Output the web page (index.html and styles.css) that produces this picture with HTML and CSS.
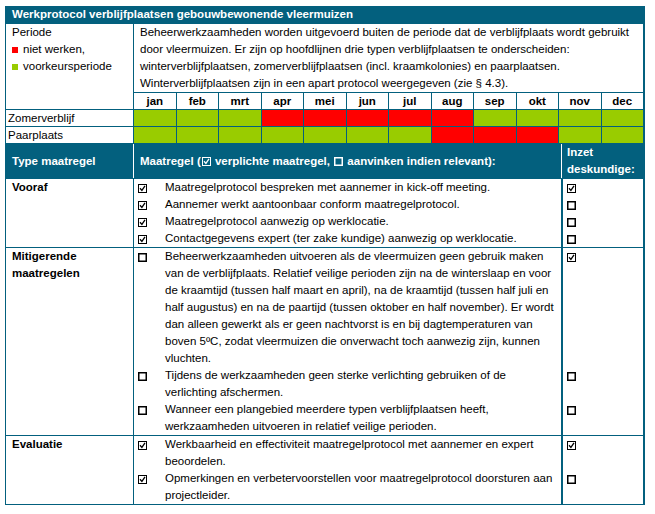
FILE: index.html
```html
<!DOCTYPE html>
<html lang="nl">
<head>
<meta charset="utf-8">
<title>Werkprotocol verblijfplaatsen gebouwbewonende vleermuizen</title>
<link rel="stylesheet" href="styles.css">
</head>
<body>
<div class="sheet">
  <div class="title">Werkprotocol verblijfplaatsen gebouwbewonende vleermuizen</div>

  <div class="top">
    <div class="legend">
      <div>Periode</div>
      <div class="key"><span class="sw red"></span>niet werken,</div>
      <div class="key"><span class="sw green"></span>voorkeursperiode</div>
    </div>
    <div class="intro">Beheerwerkzaamheden worden uitgevoerd buiten de periode dat de verblijfplaats wordt gebruikt<br>door vleermuizen. Er zijn op hoofdlijnen drie typen verblijfplaatsen te onderscheiden:<br>winterverblijfplaatsen, zomerverblijfplaatsen (incl. kraamkolonies) en paarplaatsen.<br>Winterverblijfplaatsen zijn in een apart protocol weergegeven (zie § 4.3).</div>
    <div class="mon">jan</div><div class="mon">feb</div><div class="mon">mrt</div><div class="mon">apr</div>
    <div class="mon">mei</div><div class="mon">jun</div><div class="mon">jul</div><div class="mon">aug</div>
    <div class="mon">sep</div><div class="mon">okt</div><div class="mon">nov</div><div class="mon">dec</div>

    <div class="rowlabel">Zomerverblijf</div>
    <div class="c g"></div><div class="c g"></div><div class="c g"></div><div class="c r"></div>
    <div class="c r"></div><div class="c r"></div><div class="c r"></div><div class="c r"></div>
    <div class="c g"></div><div class="c g"></div><div class="c g"></div><div class="c g"></div>

    <div class="rowlabel">Paarplaats</div>
    <div class="c g"></div><div class="c g"></div><div class="c g"></div><div class="c g"></div>
    <div class="c g"></div><div class="c g"></div><div class="c g"></div><div class="c r"></div>
    <div class="c r"></div><div class="c r"></div><div class="c g"></div><div class="c g"></div>
  </div>

  <div class="head">
    <div class="hcell type">Type maatregel</div>
    <div class="hcell mid">Maatregel (<svg class="cb" width="9" height="9" viewBox="0 0 9 9"><rect x="0.5" y="0.5" width="8" height="8" fill="none" stroke="#fff"/><path d="M2 4.3 L3.9 6.4 L7 1.9" fill="none" stroke="#fff" stroke-width="1.3"/></svg> verplichte maatregel, <svg class="cb" width="9" height="9" viewBox="0 0 9 9"><rect x="0.75" y="0.75" width="7.5" height="7.5" fill="none" stroke="#fff" stroke-width="1.5"/></svg> aanvinken indien relevant):</div>
    <div class="hcell right">Inzet<br>deskundige:</div>
  </div>

  <div class="sect">
    <div class="label" style="grid-row: span 4">Vooraf</div>
    <div class="item"><span class="box"><svg width="9" height="9" viewBox="0 0 9 9"><rect x="0.5" y="0.5" width="8" height="8" fill="none" stroke="#000"/><path d="M2 4.3 L3.9 6.4 L7 1.9" fill="none" stroke="#000" stroke-width="1.3"/></svg></span><span>Maatregelprotocol bespreken met aannemer in kick-off meeting.</span></div>
    <div class="exp"><svg width="9" height="9" viewBox="0 0 9 9"><rect x="0.5" y="0.5" width="8" height="8" fill="none" stroke="#000"/><path d="M2 4.3 L3.9 6.4 L7 1.9" fill="none" stroke="#000" stroke-width="1.3"/></svg></div>
    <div class="item"><span class="box"><svg width="9" height="9" viewBox="0 0 9 9"><rect x="0.5" y="0.5" width="8" height="8" fill="none" stroke="#000"/><path d="M2 4.3 L3.9 6.4 L7 1.9" fill="none" stroke="#000" stroke-width="1.3"/></svg></span><span>Aannemer werkt aantoonbaar conform maatregelprotocol.</span></div>
    <div class="exp"><svg width="9" height="9" viewBox="0 0 9 9"><rect x="0.75" y="0.75" width="7.5" height="7.5" fill="none" stroke="#000" stroke-width="1.5"/></svg></div>
    <div class="item"><span class="box"><svg width="9" height="9" viewBox="0 0 9 9"><rect x="0.5" y="0.5" width="8" height="8" fill="none" stroke="#000"/><path d="M2 4.3 L3.9 6.4 L7 1.9" fill="none" stroke="#000" stroke-width="1.3"/></svg></span><span>Maatregelprotocol aanwezig op werklocatie.</span></div>
    <div class="exp"><svg width="9" height="9" viewBox="0 0 9 9"><rect x="0.75" y="0.75" width="7.5" height="7.5" fill="none" stroke="#000" stroke-width="1.5"/></svg></div>
    <div class="item"><span class="box"><svg width="9" height="9" viewBox="0 0 9 9"><rect x="0.5" y="0.5" width="8" height="8" fill="none" stroke="#000"/><path d="M2 4.3 L3.9 6.4 L7 1.9" fill="none" stroke="#000" stroke-width="1.3"/></svg></span><span>Contactgegevens expert (ter zake kundige) aanwezig op werklocatie.</span></div>
    <div class="exp"><svg width="9" height="9" viewBox="0 0 9 9"><rect x="0.75" y="0.75" width="7.5" height="7.5" fill="none" stroke="#000" stroke-width="1.5"/></svg></div>
  </div>

  <div class="sect">
    <div class="label" style="grid-row: span 3">Mitigerende<br>maatregelen</div>
    <div class="item"><span class="box"><svg width="9" height="9" viewBox="0 0 9 9"><rect x="0.75" y="0.75" width="7.5" height="7.5" fill="none" stroke="#000" stroke-width="1.5"/></svg></span><span>Beheerwerkzaamheden uitvoeren als de vleermuizen geen gebruik maken<br>van de verblijfplaats. Relatief veilige perioden zijn na de winterslaap en voor<br>de kraamtijd (tussen half maart en april), na de kraamtijd (tussen half juli en<br>half augustus) en na de paartijd (tussen oktober en half november). Er wordt<br>dan alleen gewerkt als er geen nachtvorst is en bij dagtemperaturen van<br>boven 5ºC, zodat vleermuizen die onverwacht toch aanwezig zijn, kunnen<br>vluchten.</span></div>
    <div class="exp"><svg width="9" height="9" viewBox="0 0 9 9"><rect x="0.5" y="0.5" width="8" height="8" fill="none" stroke="#000"/><path d="M2 4.3 L3.9 6.4 L7 1.9" fill="none" stroke="#000" stroke-width="1.3"/></svg></div>
    <div class="item"><span class="box"><svg width="9" height="9" viewBox="0 0 9 9"><rect x="0.75" y="0.75" width="7.5" height="7.5" fill="none" stroke="#000" stroke-width="1.5"/></svg></span><span>Tijdens de werkzaamheden geen sterke verlichting gebruiken of de<br>verlichting afschermen.</span></div>
    <div class="exp"><svg width="9" height="9" viewBox="0 0 9 9"><rect x="0.75" y="0.75" width="7.5" height="7.5" fill="none" stroke="#000" stroke-width="1.5"/></svg></div>
    <div class="item"><span class="box"><svg width="9" height="9" viewBox="0 0 9 9"><rect x="0.75" y="0.75" width="7.5" height="7.5" fill="none" stroke="#000" stroke-width="1.5"/></svg></span><span>Wanneer een plangebied meerdere typen verblijfplaatsen heeft,<br>werkzaamheden uitvoeren in relatief veilige perioden.</span></div>
    <div class="exp"><svg width="9" height="9" viewBox="0 0 9 9"><rect x="0.75" y="0.75" width="7.5" height="7.5" fill="none" stroke="#000" stroke-width="1.5"/></svg></div>
  </div>

  <div class="sect">
    <div class="label" style="grid-row: span 2">Evaluatie</div>
    <div class="item"><span class="box"><svg width="9" height="9" viewBox="0 0 9 9"><rect x="0.5" y="0.5" width="8" height="8" fill="none" stroke="#000"/><path d="M2 4.3 L3.9 6.4 L7 1.9" fill="none" stroke="#000" stroke-width="1.3"/></svg></span><span>Werkbaarheid en effectiviteit maatregelprotocol met aannemer en expert<br>beoordelen.</span></div>
    <div class="exp"><svg width="9" height="9" viewBox="0 0 9 9"><rect x="0.5" y="0.5" width="8" height="8" fill="none" stroke="#000"/><path d="M2 4.3 L3.9 6.4 L7 1.9" fill="none" stroke="#000" stroke-width="1.3"/></svg></div>
    <div class="item"><span class="box"><svg width="9" height="9" viewBox="0 0 9 9"><rect x="0.5" y="0.5" width="8" height="8" fill="none" stroke="#000"/><path d="M2 4.3 L3.9 6.4 L7 1.9" fill="none" stroke="#000" stroke-width="1.3"/></svg></span><span>Opmerkingen en verbetervoorstellen voor maatregelprotocol doorsturen aan<br>projectleider.</span></div>
    <div class="exp"><svg width="9" height="9" viewBox="0 0 9 9"><rect x="0.75" y="0.75" width="7.5" height="7.5" fill="none" stroke="#000" stroke-width="1.5"/></svg></div>
  </div>
</div>
</body>
</html>
```

FILE: styles.css
```css
* { box-sizing: border-box; }
html, body { margin: 0; padding: 0; background: #fff; }
body {
  font-family: "Liberation Sans", Arial, sans-serif;
  font-size: 11.5px;
  line-height: 17px;
  color: #000;
}
.sheet {
  margin: 6px 0 0 5px;
  width: 640px;
  background: #03607e;
  padding: 0 2px 1px 1px;
  display: flex;
  flex-direction: column;
  gap: 1px;
}
.title {
  height: 17px;
  margin: 0 -2px 0 -1px;
  padding-left: 7px;
  color: #fff;
  font-weight: bold;
  line-height: 17px;
}
.top {
  display: grid;
  grid-template-columns: 127px repeat(12, 1fr);
  grid-template-rows: 68px 16px 16px 16px;
  gap: 1px;
}
.legend {
  grid-row: span 2;
  background: #fff;
  padding-left: 6px;
}
.key { display: flex; align-items: center; }
.sw { width: 6px; height: 6px; margin-right: 5px; margin-top: 1px; }
.sw.red, .c.r { background: #ff0000; }
.sw.green, .c.g { background: #99cc00; }
.intro {
  grid-column: span 12;
  background: #fff;
  padding-left: 6px;
  white-space: nowrap;
}
.mon {
  background: #fff;
  font-weight: bold;
  text-align: center;
  line-height: 16px;
}
.rowlabel {
  background: #fff;
  padding-left: 2px;
  line-height: 16px;
}
.head {
  display: grid;
  grid-template-columns: 127px 427px 81px;
  column-gap: 1px;
  background: #fff;
  height: 34px;
  color: #fff;
  font-weight: bold;
}
.hcell { background: #03607e; }
.hcell.type { padding: 9px 0 0 6px; }
.hcell.mid { padding: 9px 0 0 6px; }
.hcell.right { padding-left: 5px; }
.head .cb { margin: 0 1px; vertical-align: -1px; }
.sect {
  display: grid;
  grid-template-columns: 127px 427px 81px;
  column-gap: 1px;
}
.label {
  background: #fff;
  font-weight: bold;
  padding-left: 6px;
}
.item {
  background: #fff;
  display: grid;
  grid-template-columns: 27px 1fr;
  padding-left: 4px;
  white-space: nowrap;
}
.box svg, .exp svg { display: block; margin-top: 5px; }
.exp {
  background: #fff;
  border-left: 1px solid #03607e;
  padding-left: 4px;
}
```
